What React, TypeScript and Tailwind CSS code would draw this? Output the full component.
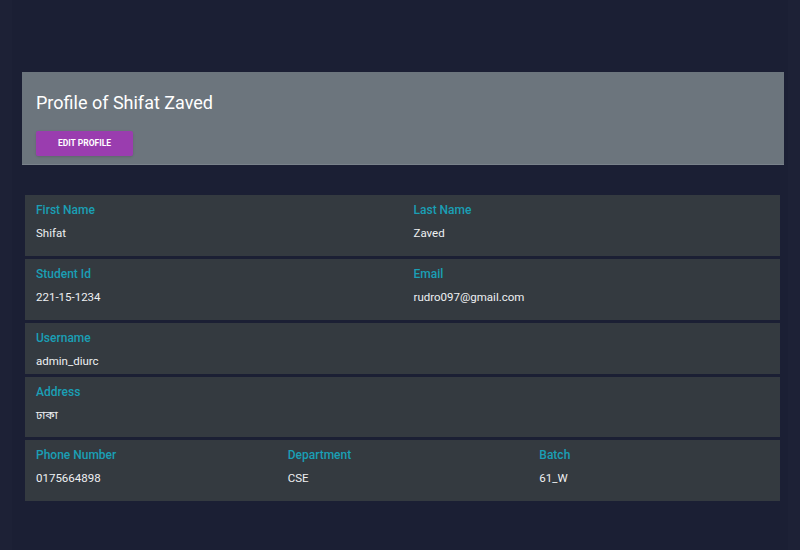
const fields = [
  { h: "h-[61px]", cols: [["First Name", "Shifat"], ["Last Name", "Zaved"]] },
  { h: "h-[61px]", cols: [["Student Id", "221-15-1234"], ["Email", "rudro097@gmail.com"]] },
  { h: "h-[51px]", cols: [["Username", "admin_diurc"]] },
  { h: "h-[60px]", cols: [["Address", "ঢাকা"]] },
  { h: "h-[61px]", cols: [["Phone Number", "0175664898"], ["Department", "CSE"], ["Batch", "61_W"]] },
];

const gridCols: Record<number, string> = {
  1: "grid-cols-1",
  2: "grid-cols-2",
  3: "grid-cols-3",
};

export default function App() {
  return (
    <div
      className="min-h-[550px] bg-[#1b1f34] flex"
      style={{ fontFamily: "Roboto, 'Noto Sans', 'Noto Sans Bengali', sans-serif" }}
    >
      <div className="w-[12px] bg-[#1d2136]" />
      <div className="flex-1 pt-[72px] pl-[10px] pr-[4px]">
        {/* header card */}
        <div className="bg-[#6c757d] h-[93px] pl-[14px] pt-[21px] border-b border-[#7a828b]">
          <h1 className="text-[18px] leading-[20px] text-white">Profile of Shifat Zaved</h1>
          <button className="mt-[18px] w-[97px] h-[25px] bg-[#9a3daf] text-white text-[8.5px] font-bold rounded-[2px] shadow-sm">
            EDIT PROFILE
          </button>
        </div>

        {/* details */}
        <div className="mt-[30px] ml-[3px] mr-[4px] flex flex-col gap-[3px]">
          {fields.map((row, i) => (
            <div key={i} className={`bg-[#343a40] ${row.h} grid ${gridCols[row.cols.length]}`}>
              {row.cols.map(([label, value]) => (
                <div key={label} className="px-[11px] pt-[8px]">
                  <div className="text-[12px] leading-[14px] font-medium text-[#1a9fb5]">{label}</div>
                  <div className="mt-[9px] text-[11.5px] leading-[14px] text-[#eef0f2]">{value}</div>
                </div>
              ))}
            </div>
          ))}
        </div>
      </div>
      <div className="w-[12px] bg-[#1d2136]" />
    </div>
  );
}
